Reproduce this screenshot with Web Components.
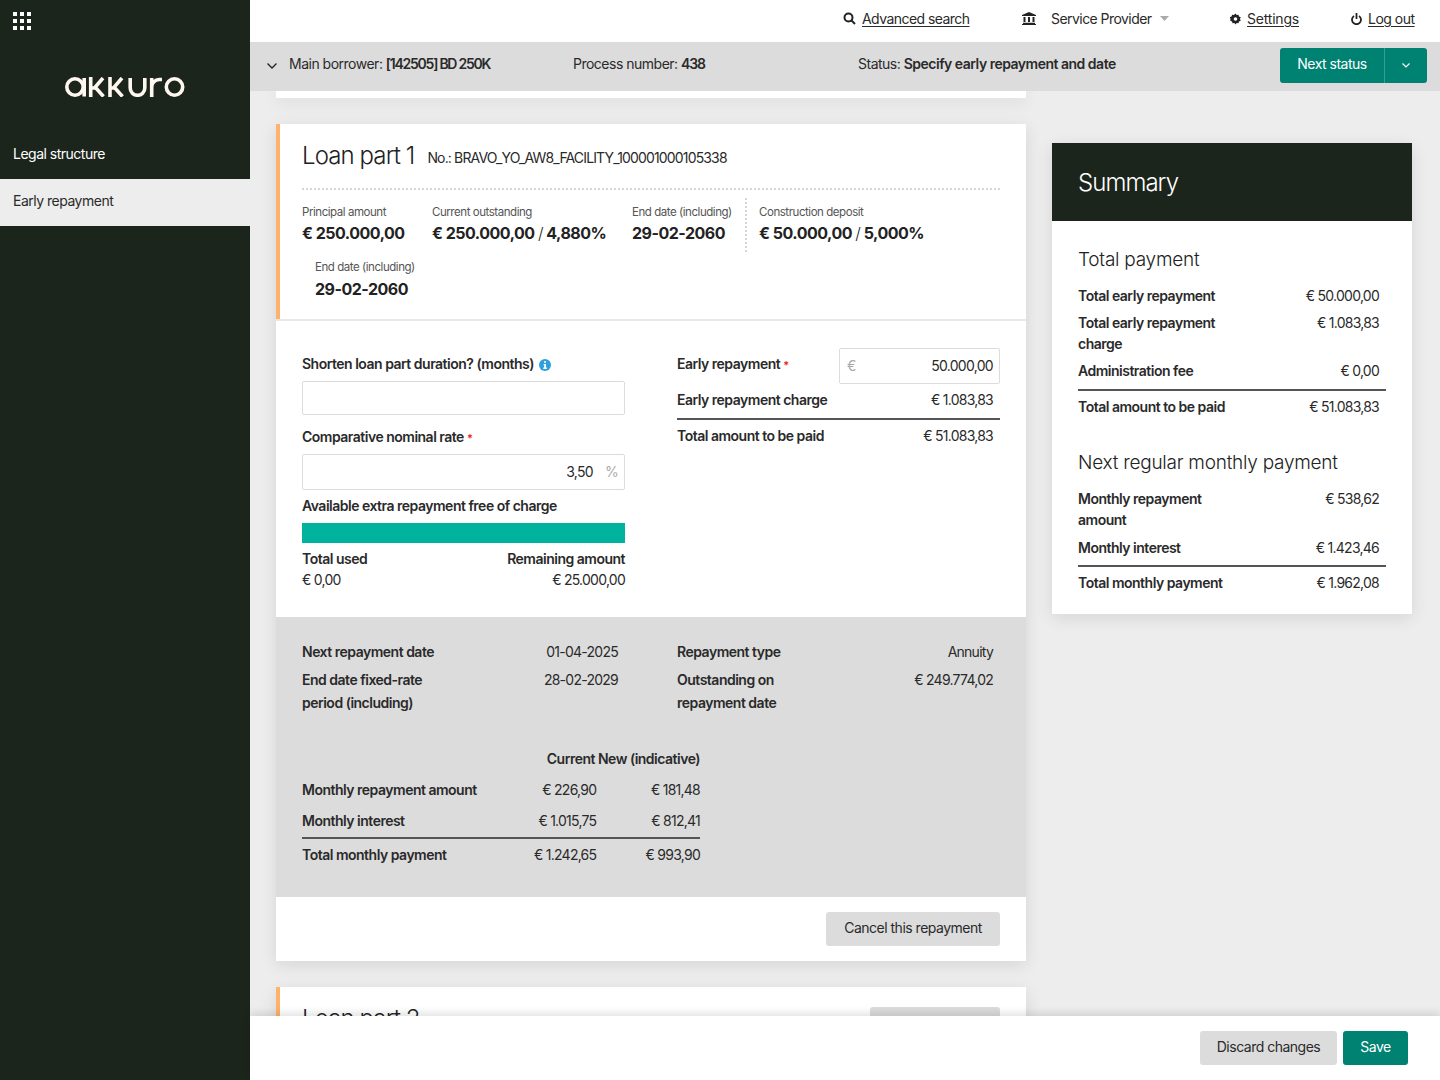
<!DOCTYPE html>
<html lang="en"><head><meta charset="utf-8"><title>Early repayment</title>
<style>
html,body{margin:0;height:100%;overflow:hidden;background:#ededed}
body{font-family:Inter,"Liberation Sans",sans-serif;font-size:14px;color:#2a2a2a;letter-spacing:-.5px}
</style></head><body>
<app-shell>
  <side-nav slot="side"></side-nav>
  <top-bar slot="top"></top-bar>
  <status-bar slot="status"></status-bar>
  <div slot="left" style="display:flex;flex-direction:column;gap:26px">
    <stub-card></stub-card>
    <loan-card></loan-card>
    <next-loan></next-loan>
  </div>
  <summary-panel slot="right"></summary-panel>
  <foot-bar slot="foot"></foot-bar>
</app-shell>
<script>
function el(name,html){
  customElements.define(name,class extends HTMLElement{
    constructor(){super();this.attachShadow({mode:'open'}).innerHTML=html;}
  });
}
const shadow='box-shadow:0 4px 16px rgba(0,0,0,.1)';
const BTN=`.btn{display:inline-flex;align-items:center;justify-content:center;height:34px;border-radius:3px;font-size:14px;box-sizing:border-box;padding-bottom:3px}
.grey{background:#dcdcdc;color:#2a2a2a}.green{background:#008272;color:#fff}`;

el('app-shell',`<style>
:host{display:grid;grid-template-columns:250px 1fr;height:1080px;overflow:hidden}
.main{display:flex;flex-direction:column;min-width:0;height:1080px}
.content{flex:1;min-height:0;overflow:hidden;display:flex;gap:26px;padding:0 28px 0 26px;align-items:flex-start}
.l{width:750px;flex:none}
.r{width:360px;flex:none;padding-top:52px}
.f,.t{position:relative;z-index:2}
</style>
<slot name="side"></slot>
<div class="main">
  <div class="t"><slot name="top"></slot><slot name="status"></slot></div>
  <div class="content"><div class="l"><slot name="left"></slot></div><div class="r"><slot name="right"></slot></div></div>
  <div class="f"><slot name="foot"></slot></div>
</div>`);

el('side-nav',`<style>
:host{display:block;background:#1c251b;color:#fff;height:1080px}
.grid{display:grid;grid-template-columns:repeat(3,4px);grid-auto-rows:4px;gap:3px;padding:12px 0 0 13px;height:18px}
.grid i{width:4px;height:4px;background:#fff;display:block}
.logo{display:flex;justify-content:center;padding-top:47px;height:55px}
.item{height:47px;display:flex;align-items:center;padding:0 0 5px 13px;box-sizing:border-box}
.on{background:#ededed;color:#2a2a2a}
</style>
<div class="grid"><i></i><i></i><i></i><i></i><i></i><i></i><i></i><i></i><i></i></div>
<div class="logo"><svg width="120" height="20" viewBox="0 0 120 20" role="img" aria-label="akkuro" fill="none" stroke="#fff8f0" stroke-width="3.6">
<circle cx="10" cy="10" r="8.200"/><path d="M19.200 1v18.500"/>
<path d="M25.700 0v20M26 11h3.500L38 1M30 10l8.500 9.500"/>
<path d="M45 0v20M45 11h3.500L57 1M49 10l8.500 9.500"/>
<path d="M65.200 1v10a7.300 7.300 0 0 0 14.600 0V1"/>
<path d="M86.700 20V1M86.700 10a7.500 7.500 0 0 1 7.500-7.500h2.800"/>
<circle cx="109.500" cy="10" r="8.200"/></svg></div>
<div class="item">Legal structure</div>
<div class="item on">Early repayment</div>`);

el('top-bar',`<style>
:host{display:flex;height:42px;background:#fff;align-items:center;position:relative}
.i{position:absolute;display:flex;align-items:center;top:10px;height:17px}
u{text-underline-offset:2px}
svg{display:block}
</style>
<div class="i" style="left:593px;gap:6px"><svg width="13" height="13" viewBox="0 0 13 13" fill="none" stroke="#222" stroke-width="2"><circle cx="5.500" cy="5.500" r="4"/><path d="M8.500 8.500l3.500 3.500"/></svg><u style="letter-spacing:-.55px">Advanced search</u></div>
<div class="i" style="left:772px"><svg width="14" height="13" viewBox="0 0 14 13" fill="#222"><path d="M7 0l7 3v1H0V3zM1.500 5h2v5h-2zM6 5h2v5H6zM10.500 5h2v5h-2zM1 10.700h12V12H1zM0 12h14v1H0z"/></svg><span style="margin-left:15px;letter-spacing:-.55px">Service Provider</span><svg style="margin-left:8px" width="9" height="5" viewBox="0 0 9 5" fill="#aaa"><path d="M0 0h9L4.500 5z"/></svg></div>
<div class="i" style="left:980px;gap:6px"><svg width="11" height="12" viewBox="0 0 24 24" fill="#222"><path fill-rule="evenodd" d="M12 0l2.500 3.500 4-.9 1 4.100 4 1.300-1.700 4 1.700 4-4 1.300-1 4.100-4-.9L12 24l-2.500-3.500-4 .9-1-4.100-4-1.300L1.200 12-.5 8l4-1.300 1-4.100 4 .9zM12 8a4 4 0 1 0 0 8 4 4 0 0 0 0-8z"/></svg><u style="letter-spacing:-.2px">Settings</u></div>
<div class="i" style="left:1101px;gap:6px"><svg width="11" height="12" viewBox="0 0 11 12" fill="none" stroke="#222" stroke-width="1.800"><path d="M3 3a4.500 4.500 0 1 0 5 0M5.500 0v6"/></svg><u>Log out</u></div>`);

el('status-bar',`<style>
:host{display:block;height:49px;background:#dcdcdc;position:relative}
.a{position:absolute;top:13px;line-height:17px;white-space:nowrap}
b{font-weight:600}
.split{position:absolute;left:1030px;top:6px;width:147px;height:35px;background:#008272;border-radius:3px;color:#fff;display:flex;align-items:center}
.split span{width:104px;text-align:center;border-right:1px solid #3a9c8f;height:35px;line-height:31px}
.split svg{margin-left:17px}
</style>
<svg class="a" style="left:17px;top:21px" width="10" height="6" viewBox="0 0 10 6" fill="none" stroke="#222" stroke-width="1.300"><path d="M.5.500L5 5 9.500.500"/></svg>
<div class="a" style="left:39px">Main borrower: <b style="letter-spacing:-1.250px">[142505] BD 250K</b></div>
<div class="a" style="left:323px">Process number: <b style="letter-spacing:-1.100px">438</b></div>
<div class="a" style="left:608px">Status: <b>Specify early repayment and date</b></div>
<div class="split"><span>Next status</span><svg width="8" height="5" viewBox="0 0 8 5" fill="none" stroke="#fff" stroke-width="1.200"><path d="M.5.500L4 4 7.500.500"/></svg></div>`);

el('stub-card',`<style>:host{display:block;height:7px;background:#fff;${shadow}}</style>`);

el('field-box',`<style>
:host{display:flex;align-items:center;box-sizing:border-box;border:1px solid #dcdcdc;border-radius:2px;background:#fff;height:34px;padding:0 6px 2px 7px;justify-content:space-between;color:#2a2a2a;letter-spacing:-.7px}
:host([tall]){height:36px}
</style><slot></slot>`);

el('kv-row',`<style>
:host{display:flex;justify-content:space-between;line-height:21px}
.k{font-weight:600}
.v{letter-spacing:-.75px;white-space:nowrap}
:host([ruled]){border-top:2px solid #555}
</style><span class="k"><slot name="k"></slot></span><span class="v"><slot name="v"></slot></span>`);

el('stat-item',`<style>
:host{display:block;flex:none}
.l{font-size:11.500px;color:#555;line-height:14px;letter-spacing:-.45px;white-space:nowrap}
.v{font-size:16px;font-weight:700;line-height:20px;margin-top:var(--gap,4px);letter-spacing:-.5px;white-space:nowrap;color:#222}
</style><div class="l"><slot name="l"></slot></div><div class="v"><slot name="v"></slot></div>`);

el('loan-card',`<style>
:host{display:block;background:#fff;${shadow}}
${BTN}
.headwrap{border-bottom:2px solid #e8e8e8}
.head{border-left:4px solid #ffb26b;padding:0 26px 0 22px;height:195px;box-sizing:border-box}
h2{margin:0;font-weight:300;font-size:24px;letter-spacing:-.9px;color:#222;line-height:28px}
.title{display:flex;align-items:flex-start;gap:13px;padding-top:18px;height:46px;border-bottom:2px dotted #d6d6d6}
.no{white-space:nowrap;letter-spacing:-.85px;line-height:17px;margin-top:7px}
.stats{display:flex;padding-top:8px}
.stats stat-item{padding:7px 0 9px}
.stats stat-item.dep{border-left:2px dotted #d6d6d6;padding-left:12px;margin-left:13px}
.form{display:grid;grid-template-columns:323px 323px;column-gap:52px;padding:27px 26px 0;height:296px;box-sizing:border-box}
label{font-weight:600;line-height:21px;display:block}
em{color:#e22;font-style:normal;font-size:11px}
.bar{height:20px;background:#00b39e;margin-top:7px}
.two{display:flex;justify-content:space-between;line-height:21px;font-weight:600;margin-top:5px}
.two+.two{font-weight:400;margin-top:0;line-height:22px;letter-spacing:-.75px}
.right-row{display:flex;justify-content:space-between;align-items:flex-start}
.right-row label{margin-top:5px}
.grey-sec{background:#dcdcdc;height:280px;box-sizing:border-box;padding:23px 26px 0}
.g2{display:grid;grid-template-columns:323px 323px;column-gap:52px}
.pair{display:grid;grid-template-columns:1fr auto;line-height:23px;padding-right:7px;align-content:start;row-gap:5px}
.pair b{font-weight:600;white-space:pre-line}
.pair span{text-align:right;letter-spacing:-.75px;white-space:nowrap}
table{border-collapse:collapse;margin-top:29px;width:398px;border-spacing:0}
td,th{padding:0;text-align:right;height:31px;font-weight:400;white-space:nowrap}
th{font-weight:600}
td{letter-spacing:-.75px}
td:first-child{text-align:left;font-weight:600;letter-spacing:-.5px}
tr.mid td{height:30px;padding-bottom:2px}
tr.tot td{border-top:2px solid #555;height:30px;padding-bottom:2px}
.foot{height:64px;padding:15px 26px 0 0;display:flex;justify-content:flex-end;box-sizing:border-box}
.foot .btn{width:174px}
</style>
<div class="headwrap"><div class="head">
  <div class="title"><h2>Loan part 1</h2><span class="no">No.: BRAVO_YO_AW8_FACILITY_100001000105338</span></div>
  <div class="stats">
    <stat-item style="width:130px"><span slot="l">Principal amount</span><span slot="v">€ 250.000,00</span></stat-item>
    <stat-item style="width:200px"><span slot="l">Current outstanding</span><span slot="v">€ 250.000,00 <span style="font-weight:300">/</span> 4,880%</span></stat-item>
    <stat-item style="width:100px"><span slot="l">End date (including)</span><span slot="v">29-02-2060</span></stat-item>
    <stat-item class="dep"><span slot="l">Construction deposit</span><span slot="v">€ 50.000,00 <span style="font-weight:300">/</span> 5,000%</span></stat-item>
  </div>
  <div style="padding:8px 0 0 13px"><stat-item style="--gap:5px"><span slot="l">End date (including)</span><span slot="v">29-02-2060</span></stat-item></div>
</div></div>
<div class="form">
  <div style="padding-top:5px">
    <label>Shorten loan part duration? (months) <svg width="12" height="12" viewBox="0 0 12 12" style="vertical-align:-2px;margin-left:2px"><circle cx="6" cy="6" r="6" fill="#2d9fdc"/><path d="M5 2.300h2v1.500H5zM4.600 5h2.400v3.500h.8V10H4.300V8.500h.9V6.300h-.6z" fill="#fff"/></svg></label>
    <field-box style="margin-top:7px"></field-box>
    <label style="margin-top:11px">Comparative nominal rate <em>*</em></label>
    <field-box tall style="margin-top:5px;justify-content:flex-end"><span>3,50</span><span style="color:#aaa;margin-left:12px">%</span></field-box>
    <label style="margin-top:5px">Available extra repayment free of charge</label>
    <div class="bar"></div>
    <div class="two"><span>Total used</span><span>Remaining amount</span></div>
    <div class="two"><span>€ 0,00</span><span>€ 25.000,00</span></div>
  </div>
  <div>
    <div class="right-row"><label>Early repayment <em>*</em></label><field-box tall style="width:161px"><span style="color:#aaa">€</span><span>50.000,00</span></field-box></div>
    <kv-row style="padding:5px 7px 8px 0"><span slot="k">Early repayment charge</span><span slot="v">€ 1.083,83</span></kv-row>
    <kv-row ruled style="padding:5px 7px 0 0"><span slot="k">Total amount to be paid</span><span slot="v">€ 51.083,83</span></kv-row>
  </div>
</div>
<div class="grey-sec">
  <div class="g2">
    <div class="pair"><b>Next repayment date</b><span>01-04-2025</span><b>End date fixed-rate
period (including)</b><span>28-02-2029</span></div>
    <div class="pair"><b>Repayment type</b><span>Annuity</span><b>Outstanding on
repayment date</b><span>€ 249.774,02</span></div>
  </div>
  <table>
    <tr><th></th><th colspan="2">Current New (indicative)</th></tr>
    <tr><td>Monthly repayment amount</td><td style="width:120px">€ 226,90</td><td style="width:104px">€ 181,48</td></tr>
    <tr class="mid"><td>Monthly interest</td><td>€ 1.015,75</td><td>€ 812,41</td></tr>
    <tr class="tot"><td>Total monthly payment</td><td>€ 1.242,65</td><td>€ 993,90</td></tr>
  </table>
</div>
<div class="foot"><span class="btn grey">Cancel this repayment</span></div>`);

el('next-loan',`<style>
:host{background:#fff;border-left:4px solid #ffb26b;height:160px;padding:20px 26px 0 22px;box-sizing:border-box;${shadow};display:flex;justify-content:space-between;align-items:flex-start}
h2{margin:0;font-weight:300;font-size:24px;letter-spacing:-.9px;color:#222;line-height:28px;margin-top:-2px}
i{display:block;width:130px;height:34px;background:#dcdcdc;border-radius:3px}
</style><h2>Loan part 2</h2><i></i>`);

el('summary-panel',`<style>
:host{display:block;background:#fff;${shadow}}
.hd{background:#1c251b;color:#fff;height:78px;display:flex;align-items:center;padding-left:26px;font-size:24px;font-weight:300;letter-spacing:-.95px}
.bd{padding:25px 33px 21px 26px}
h3{margin:0;font-weight:300;font-size:19px;line-height:28px;letter-spacing:-.25px;color:#222}
kv-row{padding-top:6px}
kv-row.tot{padding-top:5px}
.w{display:inline-block;width:155px}
hr{border:0;border-top:2px solid #555;margin:8px -7px 0 0}
</style>
<div class="hd">Summary</div>
<div class="bd">
  <h3>Total payment</h3>
  <div style="height:5px"></div>
  <kv-row><span slot="k">Total early repayment</span><span slot="v">€ 50.000,00</span></kv-row>
  <kv-row><span slot="k" class="w">Total early repayment charge</span><span slot="v">€ 1.083,83</span></kv-row>
  <kv-row><span slot="k">Administration fee</span><span slot="v">€ 0,00</span></kv-row>
  <hr>
  <kv-row class="tot"><span slot="k">Total amount to be paid</span><span slot="v">€ 51.083,83</span></kv-row>
  <h3 style="margin-top:32px">Next regular monthly payment</h3>
  <div style="height:5px"></div>
  <kv-row><span slot="k" class="w">Monthly repayment amount</span><span slot="v">€ 538,62</span></kv-row>
  <kv-row style="padding-top:7px"><span slot="k">Monthly interest</span><span slot="v">€ 1.423,46</span></kv-row>
  <hr style="margin-top:7px">
  <kv-row class="tot"><span slot="k">Total monthly payment</span><span slot="v">€ 1.962,08</span></kv-row>
</div>`);

el('foot-bar',`<style>
:host{display:flex;justify-content:flex-end;gap:6px;height:64px;background:#fff;padding:15px 32px 0 0;box-sizing:border-box;box-shadow:0 -3px 8px rgba(0,0,0,.12)}
${BTN}
</style><span class="btn grey" style="width:137px">Discard changes</span><span class="btn green" style="width:65px">Save</span>`);
</script>
</body></html>
